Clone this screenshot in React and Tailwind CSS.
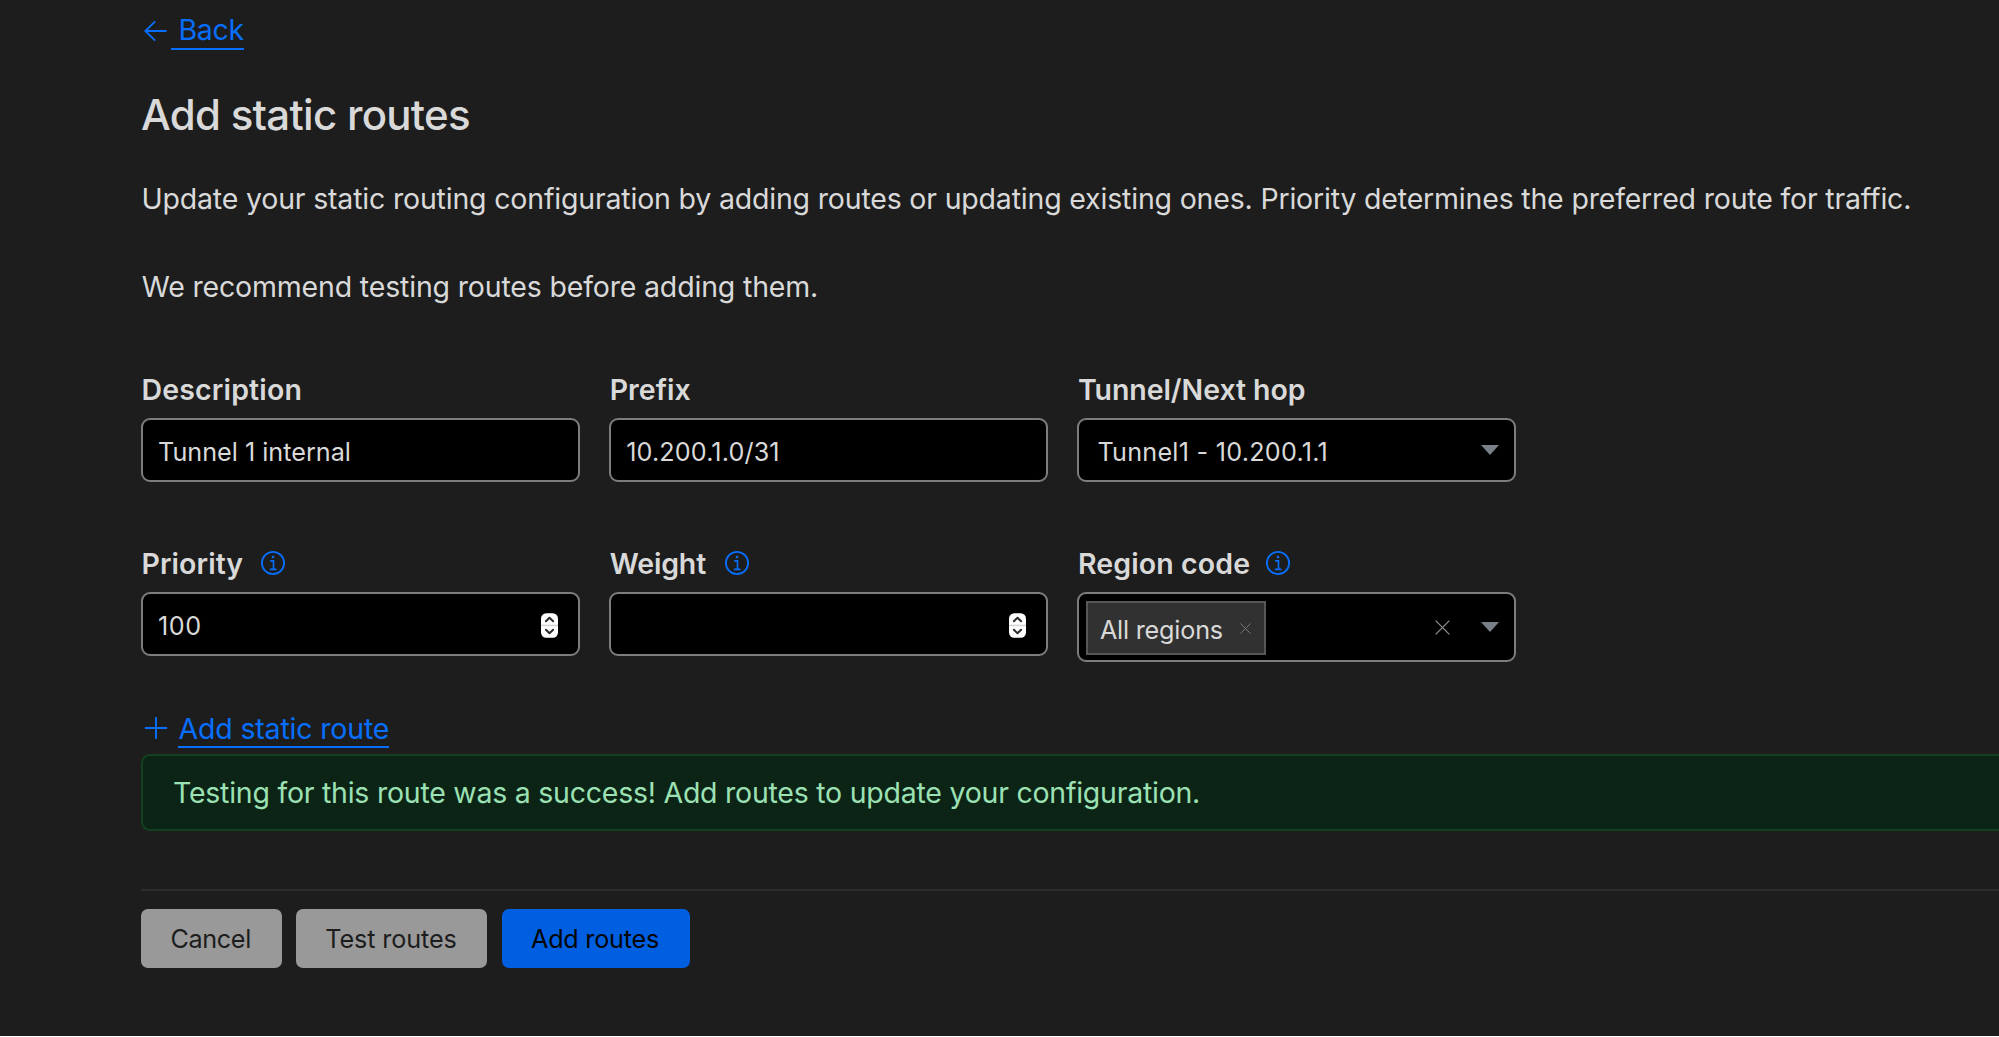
import React from 'react';

function InfoIcon({ className }) {
  return (
    <svg viewBox="0 0 24 24" fill="none" stroke="currentColor" className={`h-6 w-6 shrink-0 text-[#086ffd] ${className}`}>
      <circle cx="12" cy="12" r="11.1" strokeWidth="1.8" />
      <path d="M9.1 9.9h3.4v8.3M8.9 18.4h6.6" strokeWidth="1.6" />
      <circle cx="12" cy="6.1" r="1.3" fill="currentColor" stroke="none" />
    </svg>
  );
}

function Spinner() {
  return (
    <svg viewBox="0 0 17 25" className="mt-0.5 ml-auto h-[25px] w-[17px] shrink-0">
      <rect x="0" y="0.3" width="17" height="24.4" rx="5.2" fill="#fff" />
      <rect x="0" y="11.7" width="17" height="1.5" fill="#d2d2d2" />
      <path d="M4.9 8.3 8.5 4.7l3.6 3.6M4.9 16.7l3.6 3.6 3.6-3.6" fill="none" stroke="#2c2c2c" strokeWidth="2" strokeLinecap="round" strokeLinejoin="round" />
    </svg>
  );
}

function Caret({ className }) {
  return (
    <svg viewBox="0 0 18 10" className={`h-[10px] w-[18px] shrink-0 ${className}`}>
      <path d="M0 0h18L9 10z" fill="#798087" />
    </svg>
  );
}

function Cross({ className }) {
  return (
    <svg viewBox="0 0 16 16" className={`shrink-0 ${className}`} fill="none" stroke="currentColor">
      <path d="M.7.7l14.6 14.6M15.3.7.7 15.3" strokeWidth="1.3" />
    </svg>
  );
}

function Field({ label, labelClass, infoClass, boxClass = 'h-16 pl-[15px] pr-5', children }) {
  return (
    <div className="w-[439px]">
      <div className="flex h-10 items-center">
        <label className={`pl-[0.5px] text-[28.5px] leading-10 font-semibold ${labelClass}`}>{label}</label>
        {infoClass && <InfoIcon className={infoClass} />}
      </div>
      <div className={`mt-2 flex items-center rounded-[9px] border-2 border-[#7d7d7d] bg-black text-[25.2px] ${boxClass}`}>
        {children}
      </div>
    </div>
  );
}

export default function App() {
  return (
    <main className="h-[1036px] overflow-hidden bg-[#1d1d1d] pt-[10px] pl-[141px] font-['Inter',sans-serif] text-[28.5px] leading-10 text-[#d9d9d9]">
      <a className="flex h-10 w-fit text-[#086ffd]">
        <svg viewBox="0 0 30 40" className="h-10 w-[29.5px]" fill="none" stroke="currentColor" strokeWidth="1.9">
          <path d="M4.2 21H26M14.4 11.2 4.4 21l10 9.8" />
        </svg>
        <span className="h-10 border-b-2 border-[#086ffd] pl-[8px] tracking-[-0.3px]">Back</span>
      </a>

      <h1 className="mt-10 text-[42px] leading-[50px] font-medium tracking-[-0.72px]">Add static routes</h1>

      <p className="mt-[39px] pl-[0.5px] tracking-[-0.185px] whitespace-nowrap">
        Update your static routing configuration by adding routes or updating existing ones. Priority determines the preferred route for traffic.
      </p>
      <p className="mt-12 pl-[0.7px] tracking-[-0.17px]">We recommend testing routes before adding them.</p>

      <div className="mt-[63px] flex gap-[29.2px]">
        <Field label="Description" labelClass="tracking-[0.15px]">
          <span className="pt-[3px]">Tunnel 1 internal</span>
        </Field>
        <Field label="Prefix" labelClass="tracking-[0.05px]">
          <span className="pt-[3px] tracking-[0.12px]">10.200.1.0/31</span>
        </Field>
        <Field label="Tunnel/Next hop" labelClass="tracking-[-0.06px]" boxClass="h-16 pl-[18px] pr-[15px]">
          <span className="pt-[3px] tracking-[0.25px]">Tunnel1 - 10.200.1.1</span>
          <Caret className="ml-auto" />
        </Field>
      </div>

      <div className="mt-[62px] flex h-[118px] items-start gap-[29.2px]">
        <Field label="Priority" labelClass="tracking-[0.05px]" infoClass="ml-[17.5px] -mt-0.5">
          <span className="pt-[3px] tracking-[0.5px]">100</span>
          <Spinner />
        </Field>
        <Field label="Weight" labelClass="tracking-[-0.15px]" infoClass="ml-[18.5px] -mt-0.5">
          <Spinner />
        </Field>
        <Field label="Region code" labelClass="tracking-[0.12px]" infoClass="ml-[15.5px] -mt-0.5" boxClass="h-[70px] pl-[7px] pr-[15px]">
          <div className="mt-0.5 flex h-[54px] w-[180px] items-center border-2 border-[#565656] bg-[#313131] pr-[13px] pl-[11.5px]">
            <span className="pt-[3px] tracking-[-0.2px]">All regions</span>
            <Cross className="ml-auto h-[11px] w-[11px] text-[#808080]" />
          </div>
          <Cross className="ml-auto h-[15px] w-[15px] text-[#909090]" />
          <Caret className="ml-[31px]" />
        </Field>
      </div>

      <a className="mt-[47px] flex h-[39px] w-fit text-[#086ffd]">
        <svg viewBox="0 0 37 39" className="h-[39px] w-[37px]" fill="none" stroke="currentColor" strokeWidth="1.9">
          <path d="M4 19h22M15 8v22" />
        </svg>
        <span className="h-[39px] border-b-2 border-[#086ffd] pl-[0.5px] tracking-[-0.17px]">Add static route</span>
      </a>

      <div className="mt-[6px] flex h-[77px] items-center rounded-l-[9px] border-2 border-r-0 border-[#124020] bg-[#0b2415] pl-[30px] tracking-[-0.243px] text-[#9ce1b4]">
        Testing for this route was a success! Add routes to update your configuration.
      </div>

      <hr className="mt-[58px] border-t-2 border-[#2d2d2d]" />

      <div className="mt-[18px] flex h-[59px] gap-[14.5px] text-[25.2px]">
        <button className="w-[140.5px] rounded-[7px] bg-[#999999] pr-px tracking-[-0.39px] text-[#1d1d1d]">Cancel</button>
        <button className="w-[191px] rounded-[7px] bg-[#999999] pr-px tracking-[-0.1px] text-[#1d1d1d]">Test routes</button>
        <button className="w-[188px] rounded-[7px] bg-[#005ee0] pr-px tracking-[-0.24px] text-[#050505]">Add routes</button>
      </div>
    </main>
  );
}
